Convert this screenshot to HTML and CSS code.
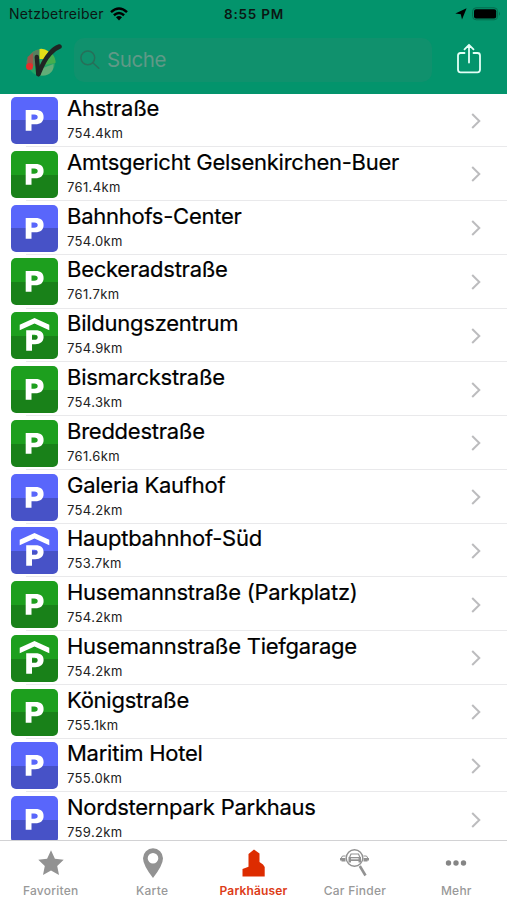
FILE: index.html
```
<!DOCTYPE html>
<html lang="de">
<head>
<meta charset="utf-8">
<title>Parkhäuser</title>
<link rel="stylesheet" href="styles.css">
</head>
<body>
<svg class="defs" aria-hidden="true">
  <symbol id="p" viewBox="0 0 47 47"><path fill="#fff" fill-rule="evenodd" d="M14.700 13H24.500C30 13 32.600 15.600 32.600 19.900C32.600 24.500 29.700 27.200 24.200 27.200H20.500V33.800H14.700ZM20.500 17.500V22.800H23.200C25.500 22.800 26.700 21.900 26.700 20.100C26.700 18.400 25.600 17.500 23.300 17.500Z"/></symbol>
  <symbol id="g" viewBox="0 0 47 47"><path fill="#fff" d="M23.500 6L38.300 12.700V18.300L23.500 11.500L8.700 18.300V12.700Z"/><path fill="#fff" fill-rule="evenodd" d="M15.200 18.300H24.500C30 18.300 32.600 20.600 32.600 25C32.600 29.500 29.500 32.200 24.200 32.200H21V38.700H15.200ZM21 22.700V27.800H23.400C25.600 27.800 26.700 26.900 26.700 25.200C26.700 23.500 25.700 22.700 23.500 22.700Z"/></symbol>
  <symbol id="c" viewBox="0 0 10 16"><path d="M1.200 1L8.300 8L1.200 15" fill="none" stroke="#bcbcbe" stroke-width="2"/></symbol>
</svg>
<div class="app">
  <header class="header">
    <div class="status">
      <div class="carrier"><span>Netzbetreiber</span>
        <svg width="18" height="14" viewBox="0 0 18 14"><g fill="none" stroke="#000" stroke-width="2.500"><path d="M1 5.100Q9-2 17 5.100"/><path d="M3.900 8.200Q9 3.800 14.100 8.200"/></g><path d="M6 10.200Q9 7.900 12 10.200L9 13.500Z"/></svg>
      </div>
      <div class="clock">8:55 PM</div>
      <div class="power">
        <svg width="12" height="12" viewBox="0 0 12 12"><path d="M11.600.3L7 11.500L5.800 6.300L.3 5.600Z"/></svg>
        <svg width="29" height="14" viewBox="0 0 29 14"><rect x=".6" y=".8" width="25" height="12" rx="3.500" fill="none" stroke="#056c4e"/><rect x="2" y="2.200" width="22.200" height="9.200" rx="2"/><path d="M27 4.800Q29 6.800 27 8.800Z" fill="#056c4e"/></svg>
      </div>
    </div>
    <div class="bar">
      <svg class="logo" width="38" height="38" viewBox="0 0 38 38">
        <circle cx="17.500" cy="22.500" r="13.500" fill="#23a566"/>
        <path d="M15 14V9.500Q8 10 4.500 17L2.500 21V26H12Z" fill="#597f5f"/>
        <path d="M15.500 9Q20 8 24.500 11.500L20 19H15.500Z" fill="#e4df17"/>
        <path d="M21 20L27.500 13Q32 18 31.500 23L20 25Z" fill="#45ae4e"/>
        <path d="M19 28L29.500 24Q30 31 25 34Q19 37 12 34Z" fill="#62ad78"/>
        <path d="M3.500 17L9 13V26H3.500Z" fill="#98584a"/>
        <circle cx="5.500" cy="26.500" r="3.500" fill="#e22e2c"/>
        <path d="M12.800 17L14.300 34" fill="none" stroke="#202523" stroke-width="4.400" stroke-linecap="round"/>
        <path d="M14.500 34Q20 20 26 13.500Q30 8.500 35.500 6.500" fill="none" stroke="#202523" stroke-width="4.600" stroke-linecap="round"/>
      </svg>
      <div class="search">
        <svg width="20" height="20" viewBox="0 0 20 20"><g fill="none" stroke="#276f59" stroke-width="1.500" stroke-linecap="round"><circle cx="7.800" cy="7.800" r="6.900"/><path d="M12.800 12.800L18.800 18.300"/></g></svg>
        <span>Suche</span>
      </div>
      <svg class="share" width="26" height="32" viewBox="0 0 26 32"><g fill="none" stroke="#e4fff7" stroke-width="1.800" stroke-linecap="round" stroke-linejoin="round"><path d="M8.500 10H4.500Q2 10 2 12.500V26.500Q2 29.300 4.500 29.300H21.500Q24 29.300 24 26.500V12.500Q24 10 21.500 10H17.500M13 19.500V2M8.500 6.300L13 1.800L17.500 6.300"/></g></svg>
    </div>
  </header>
  <main class="list">
    <div class="row"><svg class="tile blue"><use href="#p"/></svg><div class="info"><b>Ahstraße</b><small>754.4km</small></div><svg class="chev"><use href="#c"/></svg></div>
    <div class="row"><svg class="tile green"><use href="#p"/></svg><div class="info"><b>Amtsgericht Gelsenkirchen-Buer</b><small>761.4km</small></div><svg class="chev"><use href="#c"/></svg></div>
    <div class="row"><svg class="tile blue"><use href="#p"/></svg><div class="info"><b>Bahnhofs-Center</b><small>754.0km</small></div><svg class="chev"><use href="#c"/></svg></div>
    <div class="row"><svg class="tile green"><use href="#p"/></svg><div class="info"><b>Beckeradstraße</b><small>761.7km</small></div><svg class="chev"><use href="#c"/></svg></div>
    <div class="row"><svg class="tile green"><use href="#g"/></svg><div class="info"><b>Bildungszentrum</b><small>754.9km</small></div><svg class="chev"><use href="#c"/></svg></div>
    <div class="row"><svg class="tile green"><use href="#p"/></svg><div class="info"><b>Bismarckstraße</b><small>754.3km</small></div><svg class="chev"><use href="#c"/></svg></div>
    <div class="row"><svg class="tile green"><use href="#p"/></svg><div class="info"><b>Breddestraße</b><small>761.6km</small></div><svg class="chev"><use href="#c"/></svg></div>
    <div class="row"><svg class="tile blue"><use href="#p"/></svg><div class="info"><b>Galeria Kaufhof</b><small>754.2km</small></div><svg class="chev"><use href="#c"/></svg></div>
    <div class="row"><svg class="tile blue"><use href="#g"/></svg><div class="info"><b>Hauptbahnhof-Süd</b><small>753.7km</small></div><svg class="chev"><use href="#c"/></svg></div>
    <div class="row"><svg class="tile green"><use href="#p"/></svg><div class="info"><b>Husemannstraße (Parkplatz)</b><small>754.2km</small></div><svg class="chev"><use href="#c"/></svg></div>
    <div class="row"><svg class="tile green"><use href="#g"/></svg><div class="info"><b>Husemannstraße Tiefgarage</b><small>754.2km</small></div><svg class="chev"><use href="#c"/></svg></div>
    <div class="row"><svg class="tile green"><use href="#p"/></svg><div class="info"><b>Königstraße</b><small>755.1km</small></div><svg class="chev"><use href="#c"/></svg></div>
    <div class="row"><svg class="tile blue"><use href="#p"/></svg><div class="info"><b>Maritim Hotel</b><small>755.0km</small></div><svg class="chev"><use href="#c"/></svg></div>
    <div class="row"><svg class="tile blue"><use href="#p"/></svg><div class="info"><b>Nordsternpark Parkhaus</b><small>759.2km</small></div><svg class="chev"><use href="#c"/></svg></div>
  </main>
  <nav class="tabs">
    <div class="tab"><svg width="32" height="32" viewBox="0 0 32 32"><path fill="#929292" d="M16 3.300L19.900 11.700L28.700 12.700L22.200 18.900L24 28L16 23.500L8 28L9.800 18.900L3.300 12.700L12.100 11.700Z"/></svg><span>Favoriten</span></div>
    <div class="tab"><svg width="32" height="32" viewBox="0 0 32 32"><path fill="#929292" fill-rule="evenodd" d="M17 31Q7 18 7 11.200A10 10 0 0 1 27 11.200Q27 18 17 31ZM17 6A5.300 5.300 0 1 0 17 16.600A5.300 5.300 0 1 0 17 6Z"/></svg><span>Karte</span></div>
    <div class="tab active"><svg width="32" height="32" viewBox="0 0 32 32"><path fill="#dd2c00" d="M4.500 29.500V22L10.500 19.800V7L16 2.500L21.500 6.500V15L25 17.500L26.700 20V29.500Z"/></svg><span>Parkhäuser</span></div>
    <div class="tab"><svg width="32" height="32" viewBox="0 0 32 32"><g fill="none" stroke="#929292"><circle cx="15.500" cy="11" r="8.300" stroke-width="1.400"/><path d="M20.800 19L26.500 28.500" stroke-width="2.600"/><path d="M10.500 10.500L12 7H19.500L21 10.500" stroke-width="1.200"/><path d="M6.500 9H3.500L2 11.500M24.500 9H27.500L29 11.500" stroke-width="1"/></g><path fill="#929292" d="M9.500 10H22V15.500H19.500V14H12V15.500H9.500ZM1 11H6.500V14.500H2.500V13.500H1ZM24.500 11H30V13.500H28.500V14.500H24.500Z"/><path stroke="#fff" d="M12 11.800H19.500"/></svg><span>Car Finder</span></div>
    <div class="tab"><svg width="32" height="32" viewBox="0 0 32 32"><g fill="#858585"><circle cx="8.500" cy="16" r="2.700"/><circle cx="16" cy="16" r="2.700"/><circle cx="23.500" cy="16" r="2.700"/></g></svg><span>Mehr</span></div>
  </nav>
</div>
</body>
</html>
```
FILE: styles.css
```
* { box-sizing: border-box; }
body { margin: 0; background: #fff; font-family: Inter, "Liberation Sans", sans-serif; }
svg { display: block; flex: none; }
.defs { position: absolute; width: 0; height: 0; }
.app { width: 507px; height: 900px; display: flex; flex-direction: column; overflow: hidden; }
.header { height: 93.5px; flex: none; background: #03946c; }
.status { height: 27px; display: grid; grid-template-columns: 1fr auto 1fr; align-items: center; padding: 0 6px 0 9px; color: #0b1713; }
.carrier { display: flex; align-items: center; gap: 6px; font-size: 14px; letter-spacing: .3px; }
.clock { font-size: 13.5px; font-weight: 600; letter-spacing: .8px; margin-left: -2px; }
.power { display: flex; align-items: center; justify-content: flex-end; gap: 5px; }
.bar { display: flex; align-items: center; height: 66px; padding: 0 25px 0 24px; }
.logo { margin-top: -2px; }
.search { width: 358px; height: 44px; margin-left: 12px; margin-top: -1px; padding-left: 6px; display: flex; align-items: center; gap: 7px; border-radius: 10px; background: #10916d; color: #609987; font-size: 20.5px; letter-spacing: -.4px; }
.share { margin-left: auto; margin-top: -3px; }
.list { flex: 1; min-height: 0; overflow: hidden; }
.row { height: 53.77px; display: flex; align-items: flex-start; padding: 3.7px 26px 0 10.5px; background: linear-gradient(#e9e9eb, #e9e9eb) 26px 100% / 100% 1px no-repeat; }
.tile { width: 47px; height: 47px; border-radius: 5px; }
.blue { background: linear-gradient(#5966fb 50%, #4752c7 50%); }
.green { background: linear-gradient(#1d9f1e 50%, #198119 50%); }
.info { flex: 1; margin-left: 9.5px; display: flex; flex-direction: column; color: #000; }
.info b { font-weight: 400; font-size: 22px; line-height: 26px; letter-spacing: -.25px; margin-top: -2px; white-space: nowrap; -webkit-text-stroke: .2px #000; }
.info small { font-size: 13px; line-height: 16px; letter-spacing: .35px; margin-top: 4px; color: #222; }
.chev { width: 10px; height: 16px; margin-top: 15.5px; }
.tabs { height: 60px; flex: none; display: flex; border-top: 1px solid #d2d2d4; background: #fff; }
.tab { flex: 1; display: flex; flex-direction: column; align-items: center; padding-top: 6px; color: #999; font-size: 12px; font-weight: 500; line-height: 16px; letter-spacing: .25px; white-space: nowrap; }
.tab span { margin-top: 4px; }
.active { color: #dd3c18; font-weight: 600; letter-spacing: .15px; }
```
